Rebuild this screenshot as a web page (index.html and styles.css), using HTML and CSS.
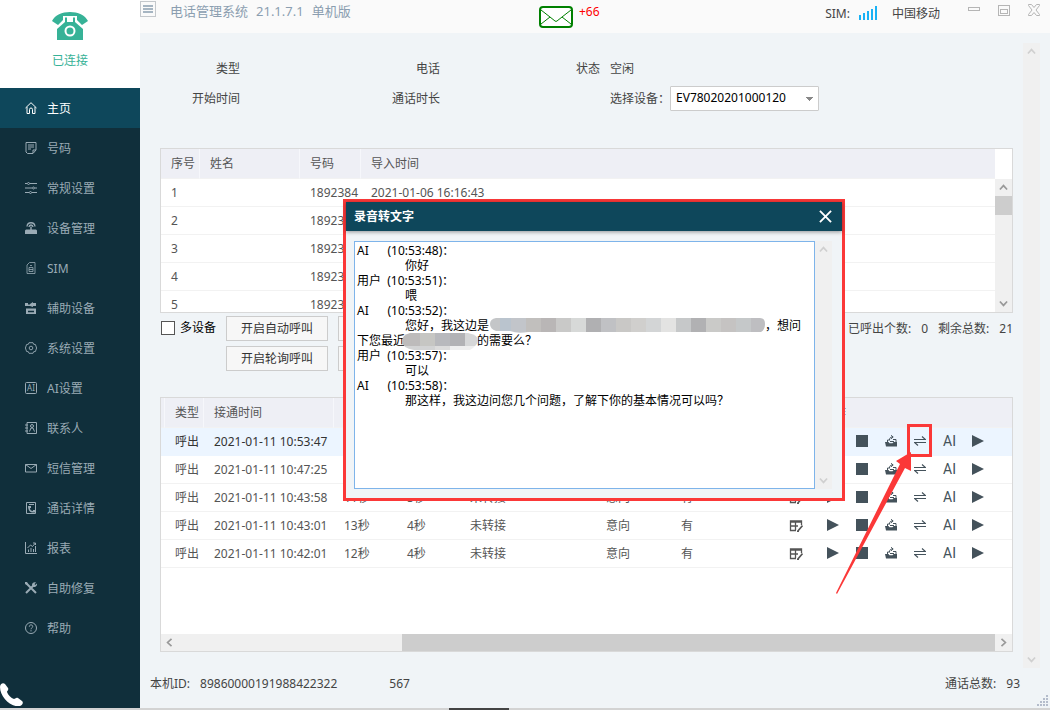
FILE: index.html
```
<!DOCTYPE html>
<html lang="zh-CN">
<head>
    <meta charset="UTF-8">
    <meta name="viewport" content="width=device-width, initial-scale=1.0">
    <title>电话管理系统</title>
    <link rel="stylesheet" href="styles.css">
</head>
<body>
    <!-- Icon set -->
    <svg class="icon-set" aria-hidden="true">
        <symbol id="i-home" viewBox="0 0 12 12"><path d="M.5 6 6 .7 11.500 6M2 5v6.500h2.500V7.500a1.500 1.500 0 0 1 3 0v4H10V5" fill="none" stroke="currentColor"/></symbol>
        <symbol id="i-note" viewBox="0 0 12 12"><path d="M1 .5h10v7.500l-3 3.500H2.500L1 10zM8 11V8h3M3 3h6M3 5h6M3 7h3" fill="none" stroke="currentColor"/></symbol>
        <symbol id="i-sliders" viewBox="0 0 12 12"><path d="M0 1.500h2M5 1.500h7M0 6h7M10 6h2M0 10.500h4M7 10.500h5" stroke="currentColor"/><g fill="none" stroke="currentColor"><circle cx="3.500" cy="1.500" r="1"/><circle cx="8.500" cy="6" r="1"/><circle cx="5.500" cy="10.500" r="1"/></g></symbol>
        <symbol id="i-router" viewBox="0 0 12 12"><path d="M1 7.500h10l1 1V12H0V8.500zM5.300 4.500h1.400V8H5.300z" fill="currentColor"/><path d="M2 4.500C2.500-.5 9.500-.5 10 4.500M4 5c.3-2.700 3.700-2.700 4 0" fill="none" stroke="currentColor" stroke-width="1.300"/></symbol>
        <symbol id="i-sim" viewBox="0 0 12 12"><path d="M2 3 4.500.5H10v11H2zM4 5.500h4v4H4zM4 7.500h4M5 3.500h2" fill="none" stroke="currentColor" opacity=".8"/></symbol>
        <symbol id="i-aux" viewBox="0 0 12 12"><path d="M0 1h3v3H0zM5 2l3-2v1h3v3H8v1L5 4H3V2.500h2zM1 6.500h10V12H1z" fill="currentColor"/><path d="M3 9.500h6" stroke="#102f3b" stroke-width="1.500"/></symbol>
        <symbol id="i-gear" viewBox="0 0 12 12"><path d="M4 .7h4l.7 1.600 1.700.2L11.600 6l-1.200 3.500-1.700.2L8 11.300H4l-.7-1.600-1.700-.2L.4 6l1.200-3.500 1.700-.2z" fill="none" stroke="currentColor" stroke-width=".9"/><circle cx="6" cy="6" r="1.800" fill="none" stroke="currentColor" stroke-width=".9"/></symbol>
        <symbol id="i-ai" viewBox="0 0 12 12"><rect x=".5" y=".5" width="11" height="11" rx="1" fill="none" stroke="currentColor"/><text x="6" y="9" font-size="8" text-anchor="middle" fill="currentColor">AI</text></symbol>
        <symbol id="i-contact" viewBox="0 0 12 12"><path d="M2 .5h9.500v11H2zM0 3h3M0 6h3M0 9h3M4.500 9.500 6 6h2l1.500 3.500" fill="none" stroke="currentColor"/><circle cx="7" cy="4" r="1.500" fill="none" stroke="currentColor"/></symbol>
        <symbol id="i-mail" viewBox="0 0 12 12"><path d="M.5 2.500h11v7.500H.5zM.5 2.500 6 6.500l5.500-4" fill="none" stroke="currentColor"/></symbol>
        <symbol id="i-detail" viewBox="0 0 12 12"><path d="M1.500.5h9v11h-9zM4 2.500h5" fill="none" stroke="currentColor"/><path d="M3 4h3v2H5c0 2 1 3 3 3V8h2v2.500H7C4 10 3 7 3 4z" fill="currentColor"/></symbol>
        <symbol id="i-chart" viewBox="0 0 12 12"><path d="M.5 0v11.500H12M3.500 10V7.500M6 10V6M8.500 10V7M10.500 10V4M2.500 6l3-3 2 1.500L10.500 1M8 1h2.500v2" fill="none" stroke="currentColor"/></symbol>
        <symbol id="i-tools" viewBox="0 0 12 12"><path d="m1 1 10 10M1 11l8-8" stroke="currentColor" stroke-width="2"/><path d="M7 3c0-2 2-3.500 4-2.500L9.500 2l.7 1L12 1.500C12.500 4 10 5.500 8 5zM0 0h2l1 2-1 1-2-1z" fill="currentColor"/></symbol>
        <symbol id="i-help" viewBox="0 0 12 12"><circle cx="6" cy="6" r="5.500" fill="none" stroke="currentColor"/><path d="M4.300 4.700C4.300 2.300 7.700 2.300 7.700 4.500 7.700 6 6 5.700 6 7.300M6 8.200v1.200" fill="none" stroke="currentColor"/></symbol>
        <symbol id="i-edit" viewBox="0 0 14 12"><path d="M7 10.500H1.500V1h11v4M1 2h12M1.500 6H9M6.500 2v8" fill="none" stroke="#555" stroke-width="1.300"/><path d="m13.500 5.500-5 6M8 12h2" stroke="#555" stroke-width="1.600"/></symbol>
        <symbol id="i-play" viewBox="0 0 12 12"><path d="M0 0 12 6 0 12z" fill="currentColor"/></symbol>
        <symbol id="i-stop" viewBox="0 0 12 12"><rect width="12" height="12" fill="currentColor"/></symbol>
        <symbol id="i-forward" viewBox="0 0 12 12"><path d="M0 7h3.500l1 1.200h3L8.500 7H12v4.500H1z" fill="currentColor"/><path d="M2.500 7V5H5M8 4.500h3V7M5 6.500h4M4.500 5C4.500 3 5.500 2 7.500 2M6 .3 8.200 2 6 3.800" fill="none" stroke="currentColor"/></symbol>
        <symbol id="i-swap" viewBox="0 0 12 12"><path d="M0 4.500h11.500L8 1.500M12 7.500H.5L4 10.500" fill="none" stroke="currentColor" stroke-width="1.200"/></symbol>
        <symbol id="i-chevron" viewBox="0 0 8 8"><path d="m.8 5.800 3.200-3.500 3.200 3.500" fill="none" stroke="currentColor" stroke-width="1.500"/></symbol>
    </svg>

    <div class="app">
        <!-- Sidebar -->
        <aside class="sidebar">
            <div class="status">
                <svg class="status-icon" viewBox="0 0 36 29"><path d="M0 9C3 3 10 0 18 0s15 3 18 9l-6 4-5-5V4H11v4l-5 5z" fill="currentColor"/><path d="M13 5.500h2V10h6V5.500h2V10l8 7v11H5V17l8-7z" fill="currentColor"/><circle cx="18" cy="19" r="4.500" fill="none" stroke="#fff" stroke-width="2"/></svg>
                <span>已连接</span>
            </div>
            <nav class="nav">
                <a class="nav-item active" href="#"><svg><use href="#i-home"/></svg>主页</a>
                <a class="nav-item" href="#"><svg><use href="#i-note"/></svg>号码</a>
                <a class="nav-item" href="#"><svg><use href="#i-sliders"/></svg>常规设置</a>
                <a class="nav-item" href="#"><svg><use href="#i-router"/></svg>设备管理</a>
                <a class="nav-item" href="#"><svg><use href="#i-sim"/></svg>SIM</a>
                <a class="nav-item" href="#"><svg><use href="#i-aux"/></svg>辅助设备</a>
                <a class="nav-item" href="#"><svg><use href="#i-gear"/></svg>系统设置</a>
                <a class="nav-item" href="#"><svg><use href="#i-ai"/></svg>AI设置</a>
                <a class="nav-item" href="#"><svg><use href="#i-contact"/></svg>联系人</a>
                <a class="nav-item" href="#"><svg><use href="#i-mail"/></svg>短信管理</a>
                <a class="nav-item" href="#"><svg><use href="#i-detail"/></svg>通话详情</a>
                <a class="nav-item" href="#"><svg><use href="#i-chart"/></svg>报表</a>
                <a class="nav-item" href="#"><svg><use href="#i-tools"/></svg>自助修复</a>
                <a class="nav-item" href="#"><svg><use href="#i-help"/></svg>帮助</a>
            </nav>
            <svg class="dial-icon" viewBox="0 0 23 23"><path d="M0 4C0 1 3-1 5 1l3 4c1 2-1 3-1 4 1 3 4 6 7 7 1 0 2-2 4-1l4 3c2 2 0 4-2 5C11 25 0 14 0 4z" fill="#fff"/></svg>
        </aside>

        <main class="main">
            <!-- Title bar -->
            <header class="titlebar">
                <div class="title">
                    <button class="menu-btn" aria-label="菜单"><svg viewBox="0 0 10 8"><path d="M0 1h10M0 4h10M0 7h10" stroke="currentColor" stroke-width="1.500"/></svg></button>
                    <span>电话管理系统</span>
                    <span>21.1.7.1</span>
                    <span>单机版</span>
                </div>
                <div class="messages">
                    <svg viewBox="0 0 34 23"><rect x="1" y="1" width="32" height="20" rx="3" fill="#fff" stroke="green" stroke-width="2"/><path d="m2 4 9 7 5 4q1 .8 2 0l5-4 9-7M2 18l9-7M32 18l-9-7" fill="none" stroke="green"/></svg>
                    <span>+66</span>
                </div>
                <div class="system">
                    <span>SIM:</span>
                    <svg class="signal" viewBox="0 0 18 14"><path d="M1 14V9M5 14V7M9 14V5M13 14V3M17 14V0" stroke="#1ab2f5" stroke-width="2"/></svg>
                    <span>中国移动</span>
                    <div class="window-btns">
                        <button aria-label="最小化"><svg viewBox="0 0 12 12"><rect x=".5" y="3.500" width="11" height="3"/></svg></button>
                        <button aria-label="最大化"><svg viewBox="0 0 12 12"><rect x=".5" y="1.500" width="11" height="10"/><rect x="2.500" y="5.500" width="7" height="4"/></svg></button>
                        <button aria-label="关闭"><svg viewBox="0 0 12 12"><path d="M.5.5h3L6 3.500 8.500.5h3v1L8 6l3.500 4.500v1h-3L6 8.500l-2.500 3h-3v-1L4 6 .5 1.500z"/></svg></button>
                    </div>
                </div>
            </header>

            <div class="body">
                <div class="content">
                    <!-- Current call -->
                    <div class="call-info">
                        <span class="label">类型</span><span></span>
                        <span class="label">电话</span><span></span>
                        <span class="label">状态</span><span class="value">空闲</span>
                        <span class="label">开始时间</span><span></span>
                        <span class="label">通话时长</span><span></span>
                        <span></span>
                        <div class="value device">
                            <label for="device">选择设备：</label>
                            <select id="device"><option>EV78020201000120</option></select>
                        </div>
                    </div>

                    <!-- Numbers to call -->
                    <section class="panel numbers">
                        <table>
                            <colgroup><col class="c-index"><col class="c-name"><col class="c-number"><col></colgroup>
                            <thead>
                                <tr><th>序号</th><th>姓名</th><th>号码</th><th>导入时间</th></tr>
                            </thead>
                            <tbody id="number-rows"></tbody>
                        </table>
                        <div class="scrollbar">
                            <svg class="up"><use href="#i-chevron"/></svg>
                            <div class="thumb"></div>
                            <svg class="down"><use href="#i-chevron"/></svg>
                        </div>
                    </section>

                    <div class="controls">
                        <label class="multi"><input type="checkbox">多设备</label>
                        <div class="call-btns">
                            <button class="btn">开启自动呼叫</button>
                            <button class="btn">停止自动呼叫</button>
                            <button class="btn">开启轮询呼叫</button>
                            <button class="btn">停止轮询呼叫</button>
                        </div>
                        <div class="counts">
                            <span>已呼出个数:</span><span>0</span>
                            <span>剩余总数:</span><span>21</span>
                        </div>
                    </div>

                    <!-- Call log -->
                    <section class="panel calls">
                        <table>
                            <colgroup><col class="c-mark"><col class="c-index"><col class="c-time"><col class="c-sec"><col class="c-sec"><col class="c-transfer"><col class="c-intent"><col class="c-record"><col class="c-edit"><col></colgroup>
                            <thead>
                                <tr><th></th><th>类型</th><th>接通时间</th><th>时长</th><th>响铃</th><th>转接</th><th>意向</th><th>录音</th><th></th><th>操作</th></tr>
                            </thead>
                            <tbody id="call-rows"></tbody>
                        </table>
                        <div class="scrollbar horizontal">
                            <svg class="left"><use href="#i-chevron"/></svg>
                            <div class="thumb"></div>
                            <svg class="right"><use href="#i-chevron"/></svg>
                        </div>
                    </section>
                </div>
                <div class="scrollbar disabled">
                    <svg class="up"><use href="#i-chevron"/></svg>
                    <svg class="down"><use href="#i-chevron"/></svg>
                </div>
            </div>

            <footer class="footer">
                <span>本机ID:</span><span>89860000191988422322</span>
                <span class="code">567</span>
                <span class="total">通话总数:</span><span>93</span>
                <svg class="grip" viewBox="0 0 12 12"><path d="M10 1h2M7 4h2M10 4h2M4 7h2M7 7h2M10 7h2M1 10h2M4 10h2M7 10h2M10 10h2" stroke="#b4bccb" stroke-width="2"/></svg>
            </footer>

            <!-- Speech to text dialog -->
            <div class="dialog" role="dialog" aria-labelledby="dialog-title">
                <div class="dialog-head">
                    <h2 id="dialog-title">录音转文字</h2>
                    <button aria-label="关闭"><svg viewBox="0 0 14 14"><path d="m1 1 12 12M13 1 1 13" stroke="#fff" stroke-width="2"/></svg></button>
                </div>
                <div class="dialog-body">
                    <textarea aria-labelledby="dialog-title" readonly>AI      (10:53:48)：
　　　　你好
用户  (10:53:51)：
　　　　喂
AI      (10:53:52)：
　　　　您好，我这边是　　　　　　　　　　　　　　　　　　　　　　　，想问
下您最近　　　　　　的需要么？
用户  (10:53:57)：
　　　　可以
AI      (10:53:58)：
　　　　那这样，我这边问您几个问题，了解下你的基本情况可以吗？</textarea>
                    <svg class="mosaic" viewBox="0 0 366 34">
                        <clipPath id="mask-1"><path d="M94 0h264q5 0 5 6t-4 8H126q-10 2-18-1H94q-6-2-6-7t6-6z"/></clipPath>
                        <clipPath id="mask-2"><path d="M8 15h58q10 2 10 7t-8 10H12Q0 30 0 23q0-6 8-8z"/></clipPath>
                        <g clip-path="url(#mask-1)">
                            <path d="M87 0h11v14H87z" fill="#c4c6c8"/><path d="M98 0h11v14H98z" fill="#bac4ce"/><path d="M109 0h15v16h-15z" fill="#c2c5ca"/><path d="M124 0h15v16h-15z" fill="#c1bfbd"/><path d="M139 0h15v14h-15z" fill="#b9b6b6"/><path d="M154 0h15v14h-15z" fill="#c9c9c8"/><path d="M169 0h15v14h-15z" fill="#d7d9d8"/><path d="M184 0h15v14h-15z" fill="#b0b0b2"/><path d="M199 0h15v14h-15z" fill="#c0c1c4"/><path d="M214 0h15v14h-15z" fill="#c9c8c6"/><path d="M229 0h15v14h-15z" fill="#d0cfcd"/><path d="M244 0h15v14h-15z" fill="#d3d5d6"/><path d="M259 0h15v14h-15z" fill="#e3e3e2"/><path d="M274 0h15v14h-15z" fill="#c6c8c9"/><path d="M289 0h15v14h-15z" fill="#b1b1b3"/><path d="M304 0h15v14h-15z" fill="#cacac8"/><path d="M319 0h15v14h-15z" fill="#c5c3c2"/><path d="M334 0h15v14h-15z" fill="#c5c8c9"/><path d="M349 0h17v14h-17z" fill="#bebec1"/>
                        </g>
                        <g clip-path="url(#mask-2)">
                            <path d="M0 14h18v14H0z" fill="#bdbbbb"/><path d="M18 14h15v14H18z" fill="#c6c6c3"/><path d="M33 14h15v14H33z" fill="#b8b9bd"/><path d="M48 14h15v14H48z" fill="#b2b2b5"/><path d="M63 14h15v14H63z" fill="#d6d7d8"/><path d="M0 28h33v6H0z" fill="#d2d3d4"/><path d="M33 28h15v6H33z" fill="#dcdcdc"/><path d="M48 28h30v6H48z" fill="#efefef"/>
                        </g>
                    </svg>
                    <div class="scrollbar disabled">
                        <svg class="up"><use href="#i-chevron"/></svg>
                        <svg class="down"><use href="#i-chevron"/></svg>
                    </div>
                </div>
            </div>
        </main>
    </div>
    <div class="taskbar"></div>

    <script>
        const numbers = [1, 2, 3, 4, 5].map(id => ({ id: id, phone: '1892384', time: '2021-01-06 16:16:43' }));

        const calls = [
            { time: '2021-01-11 10:53:47', length: '18秒', ring: '4秒' },
            { time: '2021-01-11 10:47:25', length: '15秒', ring: '4秒' },
            { time: '2021-01-11 10:43:58', length: '11秒', ring: '5秒' },
            { time: '2021-01-11 10:43:01', length: '13秒', ring: '4秒' },
            { time: '2021-01-11 10:42:01', length: '12秒', ring: '4秒' }
        ];

        // Arrow pointing at the convert button of the selected call
        const pointer = '<svg class="pointer" viewBox="0 0 78 144"><path d="M75 1 60 10l4 3L0 142l1 1L69 17l6 3z" fill="#fb3838"/></svg>';

        function iconButton(name, label) {
            return `<button aria-label="${label}"><svg><use href="#i-${name}"/></svg></button>`;
        }

        numbers.forEach(item => {
            document.getElementById('number-rows').innerHTML += `
                <tr><td>${item.id}</td><td></td><td>${item.phone}</td><td>${item.time}</td></tr>
            `;
        });

        calls.forEach((call, index) => {
            const selected = index === 0;
            document.getElementById('call-rows').innerHTML += `
                <tr class="${selected ? 'selected' : ''}">
                    <td></td>
                    <td>呼出</td>
                    <td>${call.time}</td>
                    <td>${call.length}</td>
                    <td>${call.ring}</td>
                    <td>未转接</td>
                    <td>意向</td>
                    <td>有</td>
                    <td class="edit">${iconButton('edit', '编辑')}</td>
                    <td>
                        <div class="actions">
                            ${iconButton('play', '播放')}
                            ${iconButton('stop', '停止')}
                            ${iconButton('forward', '导出')}
                            <span class="convert">${iconButton('swap', '录音转文字')}${selected ? pointer : ''}</span>
                            <button class="ai">AI</button>
                            ${iconButton('play', '播放')}
                        </div>
                    </td>
                </tr>
            `;
        });
    </script>
</body>
</html>
```
FILE: styles.css
```
/* Global styles */
* {
    box-sizing: border-box;
}

body {
    margin: 0;
    min-height: 100vh;
    display: flex;
    flex-direction: column;
    font-family: "Noto Sans", "Noto Sans CJK SC", sans-serif;
    font-size: 12px;
    line-height: 16px;
    color: #444;
    background-color: #f0f4f7;
}

button, select, textarea, input {
    font: inherit;
    color: inherit;
    margin: 0;
}

button {
    padding: 0;
    border: none;
    background: none;
    cursor: pointer;
}

svg {
    display: block;
    flex: none;
}

.icon-set {
    display: none;
}

.app {
    flex: 1;
    display: grid;
    grid-template-columns: 140px 1fr;
}

.taskbar {
    height: 2px;
    background: linear-gradient(to right, #d3d3d3 449px, #444 449px, #444 509px, #d3d3d3 509px);
}

/* Sidebar */
.sidebar {
    display: flex;
    flex-direction: column;
    background-color: #102f3b;
    color: #9aabb5;
}

.status {
    height: 88px;
    padding-top: 12px;
    display: flex;
    flex-direction: column;
    align-items: center;
    gap: 12px;
    background-color: #fff;
    color: #37b297;
}

.status-icon {
    width: 36px;
    height: 29px;
}

.nav-item {
    height: 40px;
    padding: 2px 0 0 25px;
    display: flex;
    align-items: center;
    gap: 10px;
    color: inherit;
    text-decoration: none;
}

.nav-item svg {
    width: 12px;
    height: 12px;
    margin-bottom: 2px;
}

.nav-item.active {
    background-color: #0e475b;
    color: #fff;
}

.dial-icon {
    width: 23px;
    height: 23px;
    margin-top: auto;
    margin-bottom: 2px;
}

/* Title bar */
.main {
    position: relative;
    display: flex;
    flex-direction: column;
    min-width: 0;
}

.titlebar {
    height: 33px;
    display: grid;
    grid-template-columns: 399px auto 1fr;
    background-color: #fafafa;
}

.title {
    display: flex;
    align-items: center;
    gap: 8px;
    height: 22px;
    font-size: 13px;
    color: #8b9eb0;
}

.menu-btn {
    width: 16px;
    height: 16px;
    margin-right: 6px;
    margin-bottom: 4px;
    padding: 3px 2px;
    border: 1px solid #c4c8cc;
}

.menu-btn svg {
    width: 10px;
    height: 8px;
}

.messages {
    display: flex;
    gap: 6px;
    padding-top: 6px;
    line-height: 12px;
    color: #f00;
}

.messages svg {
    width: 34px;
    height: 23px;
}

.system {
    display: flex;
    justify-content: flex-end;
    gap: 9px;
    padding: 6px 10px 0 0;
}

.signal {
    width: 18px;
    height: 14px;
    margin-right: 6px;
}

.window-btns {
    display: flex;
    gap: 18px;
    margin-left: 19px;
    height: 8px;
    align-items: center;
}

.window-btns svg {
    width: 12px;
    height: 12px;
    fill: none;
    stroke: #b5b5b5;
}

/* Page body */
.body {
    flex: 1;
    display: flex;
    gap: 10px;
    padding: 10px 10px 0 0;
}

.content {
    flex: 1;
    min-width: 0;
    display: flex;
    flex-direction: column;
    padding: 10px 0 16px 20px;
}

.call-info {
    display: grid;
    grid-template-columns: 80px 100px 100px 100px 60px 1fr;
    grid-auto-rows: 30px;
    align-items: center;
    margin-bottom: 35px;
}

.call-info span, .call-info label {
    padding-top: 2px;
}

.label {
    text-align: right;
}

.value {
    padding-left: 10px;
}

.device {
    display: flex;
    align-items: center;
}

.device select {
    width: 149px;
    height: 25px;
    padding: 0 5px;
    border: 1px solid #ccc;
    border-radius: 1px;
    appearance: none;
    color: #000;
    background: linear-gradient(to bottom right, #888 50%, transparent 50%) 139px 10px / 4px 4px no-repeat,
        linear-gradient(to bottom left, #888 50%, transparent 50%) 135px 10px / 4px 4px no-repeat #fff;
}

/* Tables */
.panel {
    border: 1px solid #d9d9d9;
    background-color: #fff;
    overflow: hidden;
}

table {
    width: 100%;
    table-layout: fixed;
    border-collapse: separate;
    border-spacing: 0;
}

th, td {
    height: 28px;
    padding: 0 0 0 10px;
    text-align: left;
    font-weight: normal;
    white-space: nowrap;
    color: #555;
    border-bottom: 1px solid #f2f2f2;
}

th {
    height: 30px;
    background-color: #eeeff5;
    border-right: 1px solid #f6f7fb;
}

th:last-child {
    border-right: none;
}

td {
    overflow: hidden;
}

.c-mark { width: 4px; }
.c-index { width: 39px; }
.c-name { width: 100px; }
.c-number { width: 61px; }
.c-time { width: 130px; }
.c-sec { width: 63px; }
.c-transfer { width: 136px; }
.c-intent { width: 75px; }
.c-record { width: 108px; }
.c-edit { width: 33px; }

.numbers {
    display: flex;
    align-items: flex-start;
    height: 165px;
}

.numbers .scrollbar {
    height: 133px;
    margin-top: 30px;
}

.calls {
    flex: 1;
    display: flex;
    flex-direction: column;
}

.calls th:first-child, .calls td:first-child {
    padding: 0;
}

.calls td:last-child {
    overflow: visible;
}

.selected td {
    background-color: #ecf5ff;
    border-color: #ecf5ff;
    color: #333;
}

.edit button {
    display: block;
}

.edit svg {
    width: 14px;
    height: 12px;
}

.actions {
    display: flex;
    align-items: center;
    gap: 17px;
    padding-left: 5px;
    padding-bottom: 1px;
    color: #44525b;
}

.actions button, .actions svg {
    display: block;
    width: 12px;
    height: 12px;
}

.actions .ai {
    font-family: Roboto, sans-serif;
    font-size: 14px;
    line-height: 12px;
}

.convert {
    position: relative;
}

.selected .convert::after {
    content: "";
    position: absolute;
    inset: -11px -6px -10px -7px;
    border: 3px solid #fb3838;
}

.actions .pointer {
    position: absolute;
    left: -78px;
    top: 16px;
    width: 78px;
    height: 144px;
    z-index: 1;
    pointer-events: none;
}

/* Scrollbars */
.scrollbar {
    flex: none;
    width: 17px;
    display: flex;
    flex-direction: column;
    background-color: #f0f0f0;
    color: #999;
}

.scrollbar svg {
    width: 17px;
    height: 17px;
    padding: 4px;
}

.scrollbar .thumb {
    height: 19px;
    background-color: #cdcdcd;
}

.scrollbar .down {
    margin-top: auto;
    transform: rotate(180deg);
}

.scrollbar.disabled {
    color: #d0d0d0;
}

.scrollbar.horizontal {
    width: auto;
    flex-direction: row;
    margin-top: auto;
}

.horizontal .thumb {
    width: 593px;
    height: 17px;
    margin-left: auto;
}

.horizontal .left {
    transform: rotate(-90deg);
}

.horizontal .right {
    transform: rotate(90deg);
}

/* Controls */
.controls {
    display: flex;
    align-items: flex-start;
    gap: 10px;
    padding-top: 3px;
    margin-bottom: 26px;
}

.multi {
    display: flex;
    align-items: center;
    gap: 5px;
    height: 24px;
    color: #000;
}

.multi input {
    width: 14px;
    height: 14px;
    margin-left: 1px;
    border: 1px solid #555;
    appearance: none;
    background-color: #fff;
}

.call-btns {
    display: grid;
    grid-template-columns: 102px 102px;
    gap: 5px 10px;
}

.btn {
    height: 25px;
    border: 1px solid #ccc;
    background-color: #f7f7f7;
    color: #333;
}

.counts {
    display: flex;
    gap: 10px;
    margin-left: auto;
    line-height: 25px;
}

/* Footer */
.footer {
    position: relative;
    display: flex;
    gap: 10px;
    height: 40px;
    padding: 0 30px 0 10px;
    line-height: 32px;
}

.code {
    margin-left: 42px;
}

.total {
    margin-left: auto;
}

.grip {
    position: absolute;
    right: 2px;
    bottom: 1px;
    width: 12px;
    height: 12px;
}

/* Dialog */
.dialog {
    position: absolute;
    top: 199px;
    left: calc(50% - 252px);
    width: 502px;
    border: 3px solid #fb3838;
    background-color: #f0f4f7;
    z-index: 10;
}

.dialog-head {
    display: flex;
    align-items: center;
    justify-content: space-between;
    height: 29px;
    padding: 0 10px 0 8px;
    background-color: #0e475b;
    box-shadow: 0 1px 4px rgba(0, 0, 0, 0.4);
    color: #fff;
}

.dialog-head h2 {
    margin: 0;
    font-size: 12px;
}

.dialog-head svg {
    width: 13px;
    height: 13px;
}

.dialog-body {
    position: relative;
    display: flex;
    height: 267px;
    padding: 10px 10px 9px 8px;
}

.dialog-body textarea {
    flex: 1;
    padding: 1px 2px;
    border: 1px solid #7eb4ea;
    outline: none;
    resize: none;
    overflow: hidden;
    line-height: 15px;
    color: #000;
    background-color: #fff;
}

.mosaic {
    position: absolute;
    left: 56px;
    top: 87px;
    width: 366px;
    height: 34px;
}
```
